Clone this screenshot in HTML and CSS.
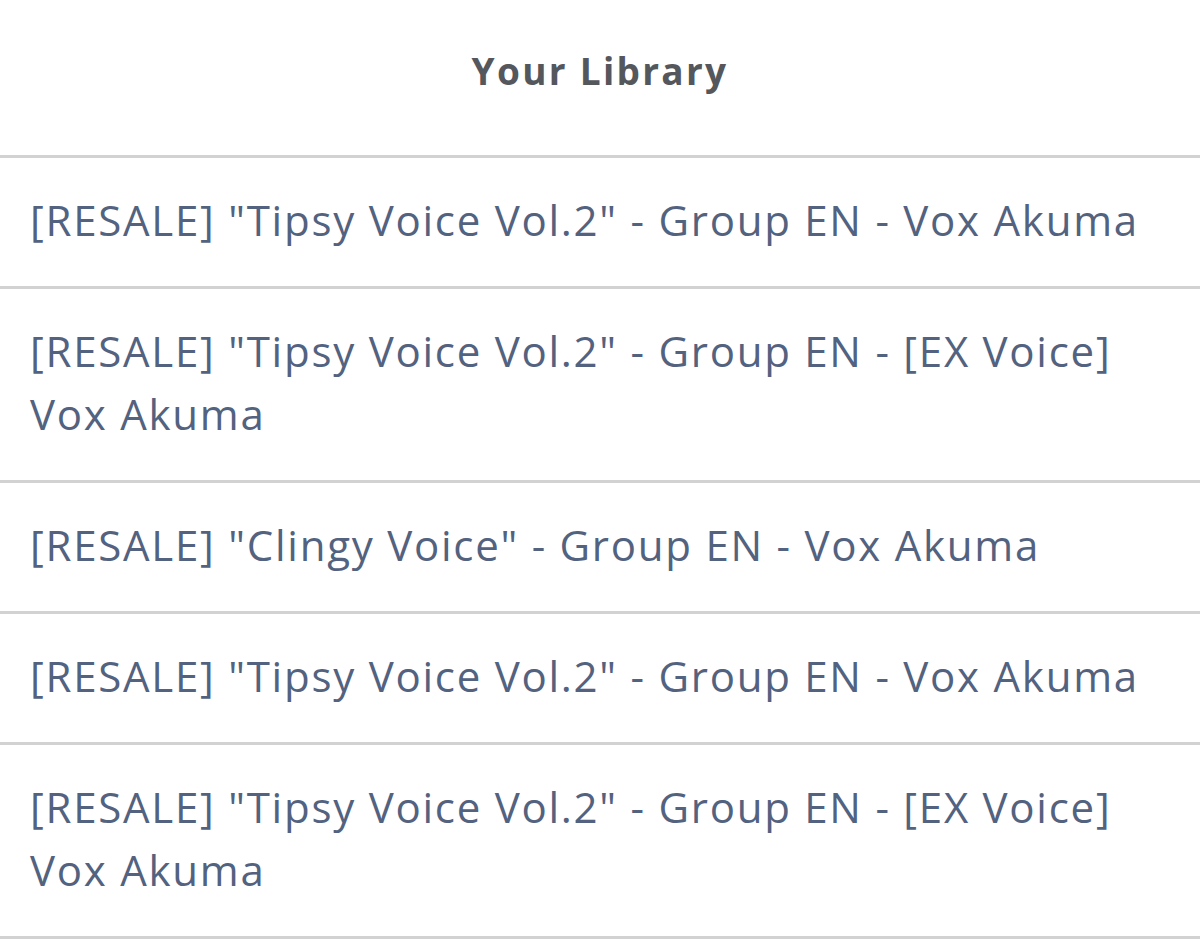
FILE: index.html
```html
<!DOCTYPE html>
<html lang="en">
<head>
    <meta charset="UTF-8">
    <meta name="viewport" content="width=device-width, initial-scale=1.0">
    <title>Your Library</title>
    <link rel="stylesheet" href="styles.css">
</head>
<body>
    <div class="library">
        <div class="library-header">Your Library</div>
        <ul class="library-list">
            <li class="library-item">[RESALE] "Tipsy Voice Vol.2" - Group EN - Vox Akuma</li>
            <li class="library-item">[RESALE] "Tipsy Voice Vol.2" - Group EN - [EX Voice] Vox Akuma</li>
            <li class="library-item">[RESALE] "Clingy Voice" - Group EN - Vox Akuma</li>
            <li class="library-item">[RESALE] "Tipsy Voice Vol.2" - Group EN - Vox Akuma</li>
            <li class="library-item">[RESALE] "Tipsy Voice Vol.2" - Group EN - [EX Voice] Vox Akuma</li>
        </ul>
    </div>
</body>
</html>
```

FILE: styles.css
```css
body {
    font-family: "Open Sans", "Noto Sans", sans-serif;
    margin: 0;
    background-color: #fff;
}
.library-header {
    height: 155px;
    display: flex;
    align-items: center;
    justify-content: center;
    font-size: 37px;
    font-weight: bold;
    letter-spacing: 2.3px;
    color: #54575c;
    padding-bottom: 14px;
    box-sizing: border-box;
}
.library-list {
    list-style: none;
    margin: 0;
    padding: 0;
    border-top: 3px solid #d2d2d2;
}
.library-item {
    font-size: 42px;
    line-height: 63px;
    letter-spacing: 1.75px;
    color: #52627f;
    padding: 30px 60px 35px 30px;
    border-bottom: 3px solid #d2d2d2;
}
```
